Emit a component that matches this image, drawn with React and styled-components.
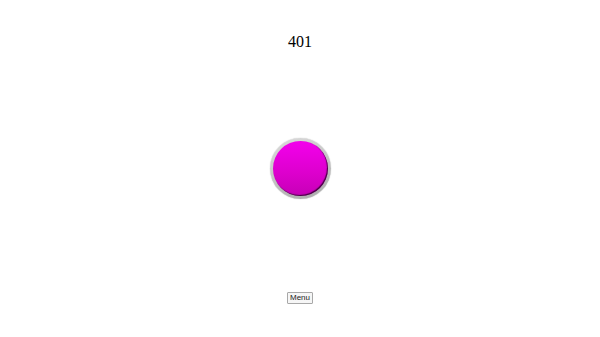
import React from 'react';
import styled, { createGlobalStyle } from 'styled-components';

const GlobalStyle = createGlobalStyle`
  body {
    margin: 0;
    background: #ffffff;
  }
`;

const Page = styled.div`
  width: 600px;
  height: 337px;
  display: flex;
  flex-direction: column;
  align-items: center;
`;

const Score = styled.div`
  margin-top: 33px;
  font-family: "Liberation Serif", serif;
  font-size: 16px;
  line-height: 18px;
  color: #000;
`;

const Ring = styled.div`
  margin-top: 87px;
  width: 61px;
  height: 61px;
  border-radius: 50%;
  box-sizing: border-box;
  padding: 3px;
  background: linear-gradient(160deg, #dcdcdc 0%, #c4c4c4 50%, #a8a8a8 100%);
  box-shadow: 0 0 1px rgba(0, 0, 0, 0.35);
`;

const Ball = styled.button`
  display: block;
  width: 100%;
  height: 100%;
  border: none;
  padding: 0;
  border-radius: 50%;
  background: linear-gradient(180deg, #f300ec 0%, #dc00cc 60%, #c600b6 100%);
  box-shadow: inset -1px -1px 1px rgba(30, 0, 30, 0.8);
  cursor: pointer;
`;

const MenuButton = styled.button`
  margin-top: 93px;
  font-family: "Liberation Sans", Arial, sans-serif;
  font-size: 8px;
  line-height: 10px;
  padding: 0 2px;
  color: #222;
  background: #f6f6f6;
  border: 1px solid #a8a8a8;
  border-radius: 1px;
`;

export default function App() {
  return (
    <Page>
      <GlobalStyle />
      <Score>401</Score>
      <Ring>
        <Ball type="button" aria-label="tap" />
      </Ring>
      <MenuButton type="button">Menu</MenuButton>
    </Page>
  );
}
